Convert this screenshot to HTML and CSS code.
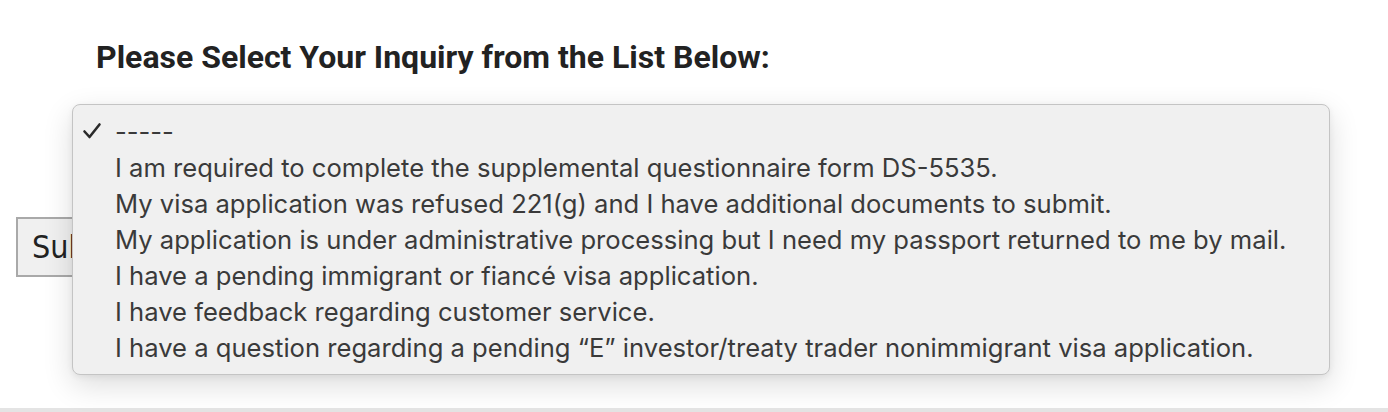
FILE: index.html
```html
<!DOCTYPE html>
<html lang="en">
<head>
    <meta charset="UTF-8">
    <meta name="viewport" content="width=device-width, initial-scale=1.0">
    <title>Inquiry</title>
    <link rel="stylesheet" href="styles.css">
</head>
<body>
    <div class="page">
        <h2 class="title">Please Select Your Inquiry from the List Below:</h2>
        <div class="form-row">
            <button class="submit">Submit</button>
            <ul class="menu">
                <li class="item selected">
                    <svg class="check" width="20" height="18" viewBox="0 0 20 18"><path d="M2.5 9.5 L7.5 15 L17.5 2.5" fill="none" stroke="#2a2a2a" stroke-width="2.6" stroke-linecap="round" stroke-linejoin="round"/></svg>-----
                </li>
                <li class="item">I am required to complete the supplemental questionnaire form DS-5535.</li>
                <li class="item">My visa application was refused 221(g) and I have additional documents to submit.</li>
                <li class="item">My application is under administrative processing but I need my passport returned to me by mail.</li>
                <li class="item">I have a pending immigrant or fiancé visa application.</li>
                <li class="item">I have feedback regarding customer service.</li>
                <li class="item">I have a question regarding a pending “E” investor/treaty trader nonimmigrant visa application.</li>
            </ul>
        </div>
    </div>
    <div class="footer"></div>
</body>
</html>
```

FILE: styles.css
```css
body {
    margin: 0;
    background: #fff;
    font-family: Inter, "Noto Sans", sans-serif;
}

.page {
    height: 408px;
    position: relative;
}

.title {
    margin: 0;
    padding: 39px 0 0 96px;
    font-family: Roboto, sans-serif;
    font-weight: 700;
    font-size: 32px;
    line-height: 36px;
    color: #222;
}

.form-row {
    position: relative;
    padding: 142px 0 0 16px;
}

.submit {
    height: 60px;
    padding: 0 14px;
    font-family: "Liberation Sans Narrow", "DejaVu Sans Condensed", sans-serif;
    font-size: 32px;
    color: #222;
    background: #f0f0f0;
    border: 2px solid #a9a9a9;
}

.menu {
    position: absolute;
    left: 72px;
    top: 29px;
    width: 1256px;
    margin: 0;
    padding: 9px 0 8px;
    list-style: none;
    background: #f0f0f0;
    border: 1px solid #c4c4c4;
    border-radius: 8px;
    box-shadow: 0 10px 30px rgba(0, 0, 0, 0.14), 0 2px 6px rgba(0, 0, 0, 0.06);
}

.item {
    position: relative;
    height: 36px;
    line-height: 36px;
    padding-left: 42px;
    font-size: 25.6px;
    color: #3a3a3a;
    white-space: nowrap;
}

.check {
    position: absolute;
    left: 9px;
    top: 8px;
}

.footer {
    height: 4px;
    background: #e4e4e4;
}
```
